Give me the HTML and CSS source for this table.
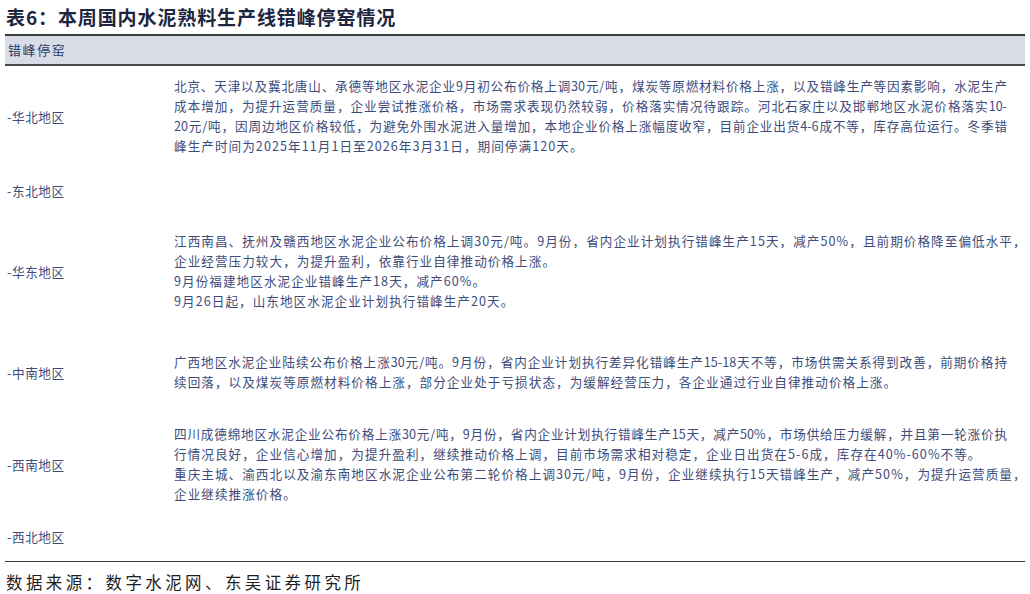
FILE: index.html
```html
<!DOCTYPE html>
<html lang="zh-CN">
<head>
<meta charset="utf-8">
<title>表6：本周国内水泥熟料生产线错峰停窑情况</title>
<link rel="stylesheet" href="styles.css">
</head>
<body>
<div class="page">
  <h1 class="title">表6：本周国内水泥熟料生产线错峰停窑情况</h1>
  <div class="table">
    <div class="thead">错峰停窑</div>
    <div class="tbody">
      <div class="label">-华北地区</div>
      <div class="content">
        <div class="ln j">北京、天津以及冀北唐山、承德等地区水泥企业9月初公布价格上调30元/吨，煤炭等原燃材料价格上涨，以及错峰生产等因素影响，水泥生产</div>
        <div class="ln j">成本增加，为提升运营质量，企业尝试推涨价格，市场需求表现仍然较弱，价格落实情况待跟踪。河北石家庄以及邯郸地区水泥价格落实10-</div>
        <div class="ln j">20元/吨，因周边地区价格较低，为避免外围水泥进入量增加，本地企业价格上涨幅度收窄，目前企业出货4-6成不等，库存高位运行。冬季错</div>
        <div class="ln">峰生产时间为2025年11月1日至2026年3月31日，期间停满120天。</div>
      </div>

      <div class="label">-东北地区</div>
      <div class="content"></div>

      <div class="label">-华东地区</div>
      <div class="content">
        <div class="ln">江西南昌、抚州及赣西地区水泥企业公布价格上调30元/吨。9月份，省内企业计划执行错峰生产15天，减产50%，且前期价格降至偏低水平，</div>
        <div class="ln">企业经营压力较大，为提升盈利，依靠行业自律推动价格上涨。</div>
        <div class="ln">9月份福建地区水泥企业错峰生产18天，减产60%。</div>
        <div class="ln">9月26日起，山东地区水泥企业计划执行错峰生产20天。</div>
      </div>

      <div class="label">-中南地区</div>
      <div class="content">
        <div class="ln j">广西地区水泥企业陆续公布价格上涨30元/吨。9月份，省内企业计划执行差异化错峰生产15-18天不等，市场供需关系得到改善，前期价格持</div>
        <div class="ln">续回落，以及煤炭等原燃材料价格上涨，部分企业处于亏损状态，为缓解经营压力，各企业通过行业自律推动价格上涨。</div>
      </div>

      <div class="label">-西南地区</div>
      <div class="content">
        <div class="ln j">四川成德绵地区水泥企业公布价格上涨30元/吨，9月份，省内企业计划执行错峰生产15天，减产50%，市场供给压力缓解，并且第一轮涨价执</div>
        <div class="ln">行情况良好，企业信心增加，为提升盈利，继续推动价格上调，目前市场需求相对稳定，企业日出货在5-6成，库存在40%-60%不等。</div>
        <div class="ln">重庆主城、渝西北以及渝东南地区水泥企业公布第二轮价格上调30元/吨，9月份，企业继续执行15天错峰生产，减产50%，为提升运营质量，</div>
        <div class="ln">企业继续推涨价格。</div>
      </div>

      <div class="label">-西北地区</div>
      <div class="content"></div>
    </div>
  </div>
  <p class="source">数据来源：数字水泥网、东吴证券研究所</p>
</div>
</body>
</html>
```
FILE: styles.css
```css
html, body {
  margin: 0;
  padding: 0;
  background: #ffffff;
}

.page {
  width: 1030px;
  height: 594px;
  overflow: hidden;
  font-family: "Noto Sans CJK SC", "Noto Sans", sans-serif;
}

.title {
  margin: 0;
  padding-left: 6px;
  height: 34px;
  line-height: 33px;
  font-size: 19px;
  font-weight: 700;
  color: #1d2640;
  letter-spacing: 0.9px;
}

.table {
  margin: 0 5px;
  border-bottom: 1.5px solid #3a3a3a;
}

.thead {
  border-top: 2px solid #3c3c3c;
  border-bottom: 2px solid #4a4a4a;
  background: #d7dce7;
  height: 28px;
  line-height: 28px;
  padding-left: 3px;
  font-size: 13px;
  letter-spacing: 1.6px;
  color: #2c3a66;
}

.tbody {
  display: grid;
  grid-template-columns: 169px 833px;
  grid-template-rows: 100px 48px 114px 88px 96px 49px;
  color: #3d4c7b;
  font-size: 12.6px;
}

.label {
  display: flex;
  align-items: center;
  padding-left: 2px;
  letter-spacing: 0.6px;
}

.content {
  display: flex;
  flex-direction: column;
  justify-content: center;
}

.ln {
  line-height: 19.8px;
  white-space: nowrap;
  letter-spacing: 1.05px;
}

.ln.j {
  white-space: normal;
  text-align: justify;
  text-align-last: justify;
  letter-spacing: 0;
}

.source {
  margin: 9px 0 0 6px;
  font-size: 16.5px;
  line-height: 22px;
  letter-spacing: 3.4px;
  color: #1e1e1e;
}
```
